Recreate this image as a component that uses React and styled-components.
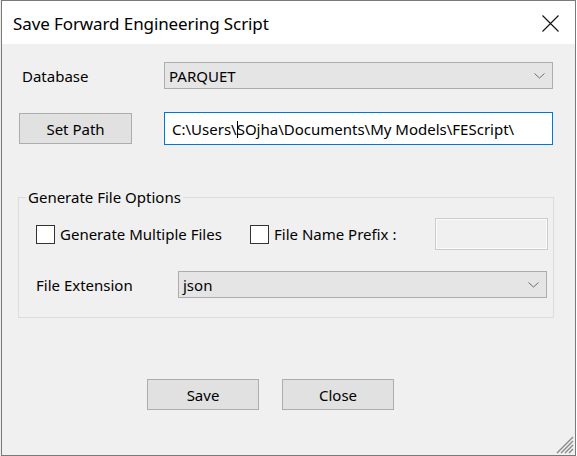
import React from "react";
import styled, { createGlobalStyle } from "styled-components";

const Global = createGlobalStyle`
  html, body { margin: 0; padding: 0; background: #ffffff; }
  body { font-family: "Noto Sans", "Open Sans", sans-serif; }
  * { box-sizing: border-box; }
`;

const Page = styled.div`
  width: 577px;
  height: 456px;
  padding-left: 1px;
  background: linear-gradient(to right, #e8efe8 0 1px, #ffffff 1px);
`;

const Window = styled.div`
  width: 575px;
  height: 456px;
  border: 1px solid #7a7a7a;
  display: flex;
  flex-direction: column;
  background: #f0f0f0;
  position: relative;
  color: #000;
`;

const TitleBar = styled.div`
  height: 43px;
  background: #ffffff;
  display: flex;
  align-items: center;
  justify-content: space-between;
  padding: 0 16px 0 11px;
  flex-shrink: 0;
`;

const Title = styled.div`
  font-size: 17px;
  letter-spacing: -0.1px;
  color: #000;
  padding-top: 1px;
`;

const CloseX = styled.svg`
  width: 17px;
  height: 17px;
  margin-top: 1px;
`;

const Body = styled.div`
  flex: 1;
  display: flex;
  flex-direction: column;
  padding: 18px 21px 0 16px;
  font-size: 15px;
`;

const FormGrid = styled.div`
  display: grid;
  grid-template-columns: 146px 389px;
  row-gap: 23px;
  align-items: center;
`;

const Label = styled.div`
  padding-left: ${(p) => p.$indent || 0}px;
  width: ${(p) => (p.$w ? p.$w + "px" : "auto")};
  flex-shrink: 0;
  white-space: nowrap;
`;

const Combo = styled.div`
  height: 27px;
  background: #e5e5e5;
  border: 1px solid #adadad;
  display: flex;
  align-items: center;
  justify-content: space-between;
  padding: 0 7px 0 4px;
  width: ${(p) => (p.$w ? p.$w + "px" : "auto")};
`;

const Chevron = styled.svg`
  width: 11px;
  height: 6px;
`;

const Button = styled.div`
  width: ${(p) => p.$w || 112}px;
  height: 31px;
  background: #e1e1e1;
  border: 1px solid #adadad;
  display: flex;
  align-items: center;
  justify-content: center;
  margin-left: ${(p) => p.$ml || 0}px;
`;

const PathBox = styled.div`
  height: 33px;
  background: #ffffff;
  border: 1px solid #0078d7;
  display: flex;
  align-items: center;
  padding-left: 7px;
  white-space: nowrap;
`;

const Caret = styled.span`
  display: inline-block;
  width: 1px;
  height: 17px;
  background: #000;
  vertical-align: -3px;
  margin-right: -1px;
`;

const Group = styled.fieldset`
  margin: 43px 0 0 0;
  width: 536px;
  height: 130px;
  border: 1px solid #dcdcdc;
  padding: 0 5px 0 17px;
  display: flex;
  flex-direction: column;
`;

const Legend = styled.legend`
  padding: 0 2px;
  margin-left: -10px;
  font-size: 15px;
  line-height: 18px;
`;

const CheckRow = styled.div`
  display: flex;
  align-items: center;
  margin-top: 12px;
  height: 32px;
`;

const CheckItem = styled.div`
  display: flex;
  align-items: center;
  gap: 5px;
  width: ${(p) => p.$w}px;
  white-space: nowrap;
`;

const Box = styled.div`
  width: 19px;
  height: 19px;
  background: #fff;
  border: 1px solid #333;
`;

const PrefixInput = styled.div`
  width: 113px;
  height: 32px;
  background: #f0f0f0;
  border: 1px solid #cccccc;
  box-shadow: inset 0 0 0 1px #fbfbfb;
  margin-left: auto;
`;

const ExtRow = styled.div`
  display: flex;
  align-items: center;
  margin-top: 21px;
`;

const ButtonRow = styled.div`
  display: flex;
  margin-top: 61px;
  padding-left: 129px;
  gap: 23px;
`;

const Grip = styled.svg`
  position: absolute;
  right: 1px;
  bottom: 1px;
  width: 18px;
  height: 18px;
`;

function ChevronIcon() {
  return (
    <Chevron viewBox="0 0 11 6">
      <path d="M0.5 0.5 L5.5 5 L10.5 0.5" fill="none" stroke="#6d6d6d" strokeWidth="1" />
    </Chevron>
  );
}

export default function App() {
  return (
    <Page>
      <Global />
      <Window>
        <TitleBar>
          <Title>Save Forward Engineering Script</Title>
          <CloseX viewBox="0 0 17 17">
            <path d="M0.5 0.5 L16.5 16.5 M16.5 0.5 L0.5 16.5" stroke="#111" strokeWidth="1.1" />
          </CloseX>
        </TitleBar>
        <Body>
          <FormGrid>
            <Label $indent={4}>Database</Label>
            <Combo>
              <span>PARQUET</span>
              <ChevronIcon />
            </Combo>
            <Button $w={113} $ml={1}>Set Path</Button>
            <PathBox>
              <span>
                C:\Users\<Caret />SOjha\Documents\My Models\FEScript\
              </span>
            </PathBox>
          </FormGrid>
          <Group>
            <Legend>Generate File Options</Legend>
            <CheckRow>
              <CheckItem $w={214}>
                <Box />
                <span>Generate Multiple Files</span>
              </CheckItem>
              <CheckItem $w={170}>
                <Box />
                <span>File Name Prefix :</span>
              </CheckItem>
              <PrefixInput />
            </CheckRow>
            <ExtRow>
              <Label $w={142}>File Extension</Label>
              <Combo $w={369}>
                <span>json</span>
                <ChevronIcon />
              </Combo>
            </ExtRow>
          </Group>
          <ButtonRow>
            <Button>Save</Button>
            <Button>Close</Button>
          </ButtonRow>
        </Body>
        <Grip viewBox="0 0 18 18">
          <path d="M17 5 L5 17 M17 9 L9 17 M17 13 L13 17 M17 1 L1 17" stroke="#8a8a8a" strokeWidth="1.4" />
        </Grip>
      </Window>
    </Page>
  );
}
